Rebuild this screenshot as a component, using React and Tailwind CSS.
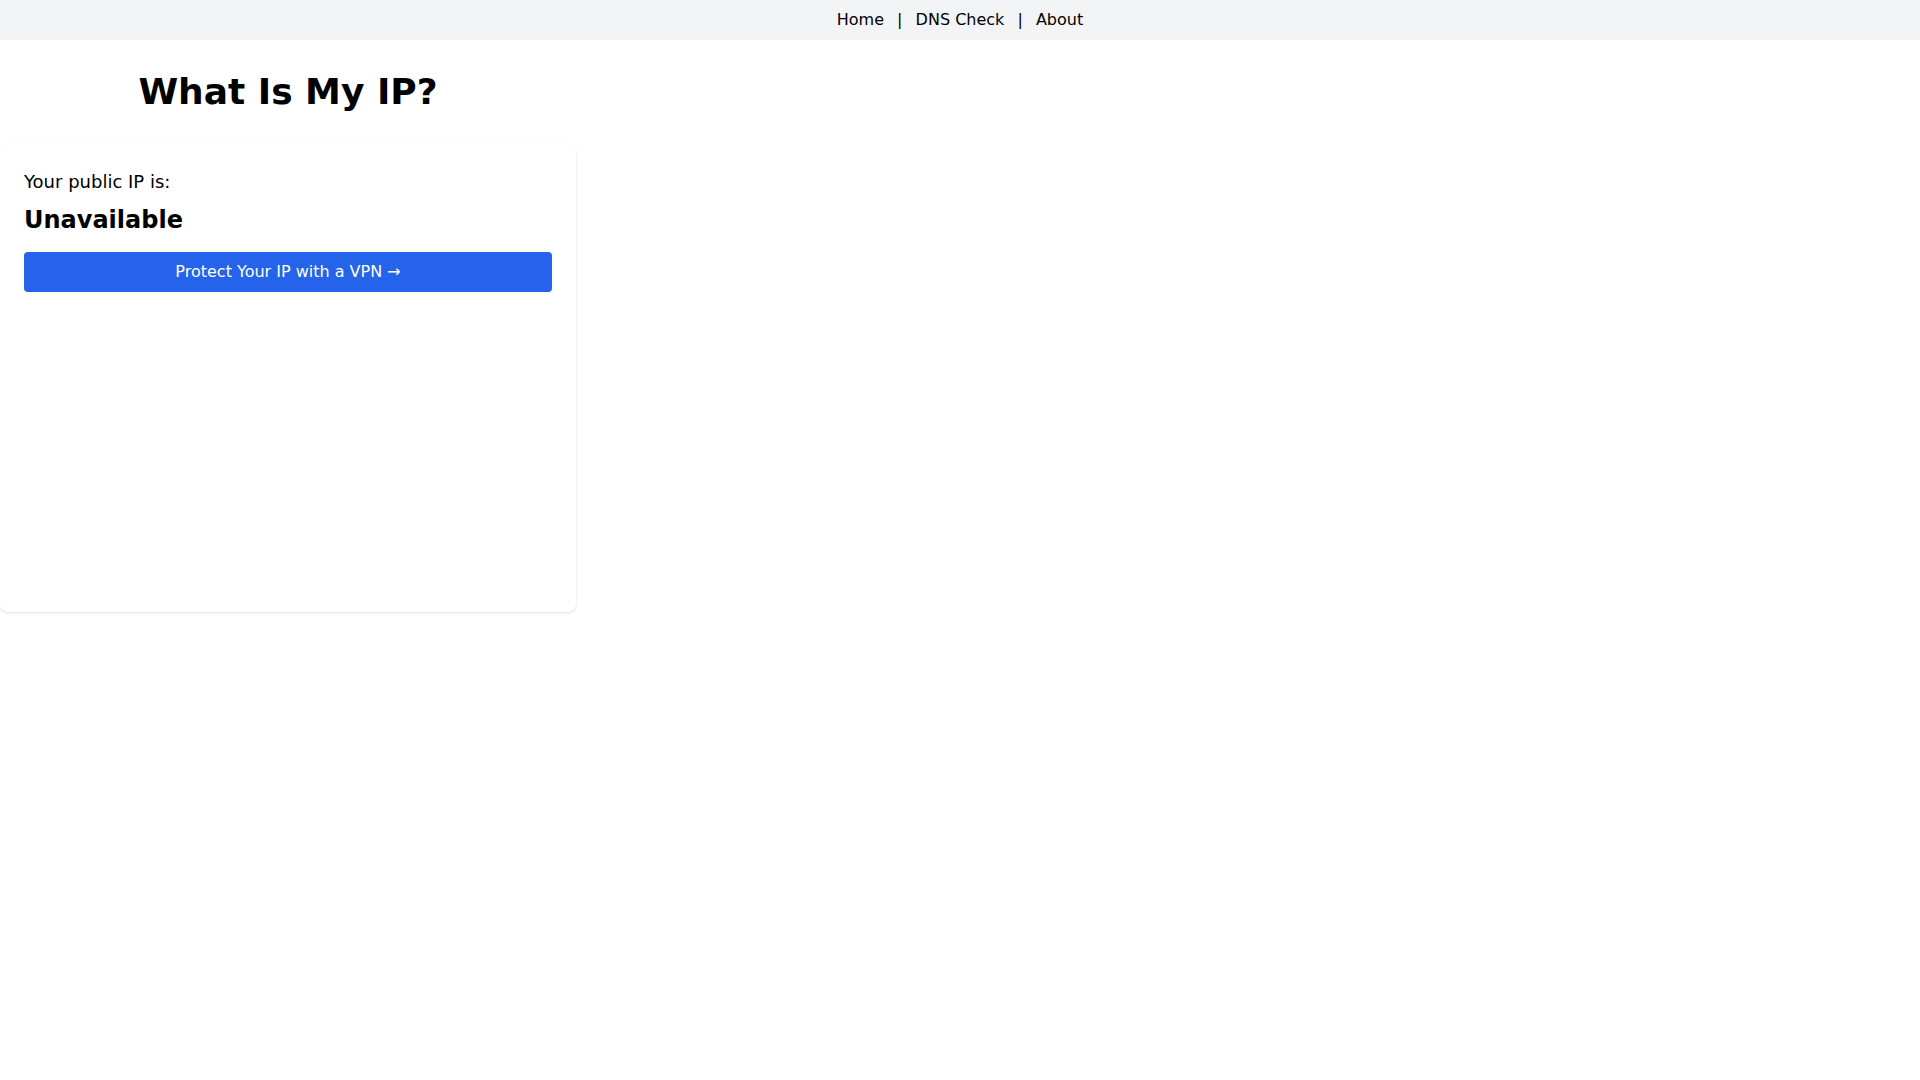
export default function App() {
  return (
    <div className="min-h-screen bg-white text-black font-['DejaVu_Sans',sans-serif]">
      <nav className="bg-[#f3f4f6] py-2 text-center text-base leading-6">
        <a href="#">Home</a>{" "}
        <span className="mx-2">|</span>{" "}
        <a href="#">DNS Check</a>{" "}
        <span className="mx-2">|</span>{" "}
        <a href="#">About</a>
      </nav>

      <main className="max-w-xl">
        <h1 className="mt-8 mb-8 text-center text-4xl font-bold leading-10">What Is My IP?</h1>

        <div className="rounded-lg bg-white p-6 shadow">
          <p className="text-lg leading-7">Your public IP is:</p>
          <p className="mt-2 text-2xl font-bold leading-8">Unavailable</p>
          <a
            href="#"
            className="mt-4 block w-full rounded bg-[#2563eb] py-2 text-center text-base leading-6 text-white"
          >
            Protect Your IP with a VPN →
          </a>
          <div className="mt-4 h-[280px]"></div>
        </div>
      </main>
    </div>
  );
}
